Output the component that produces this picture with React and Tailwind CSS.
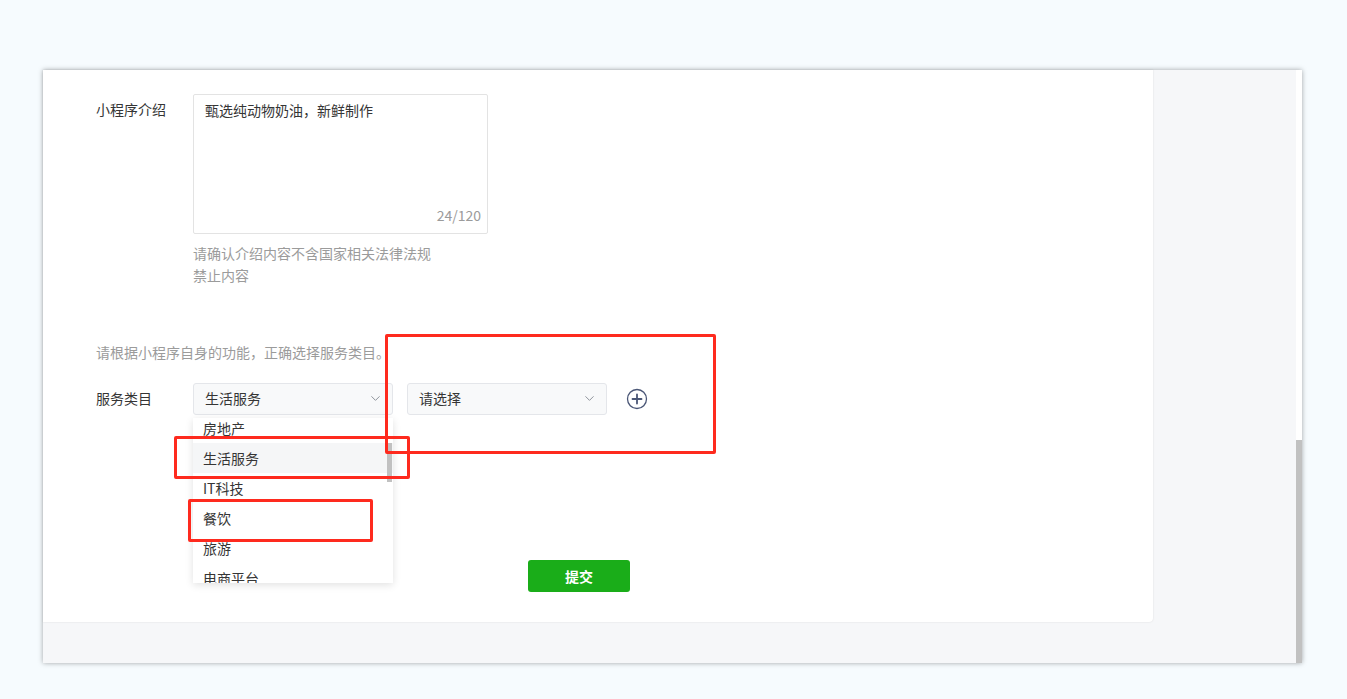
import React from 'react';
import { ChevronDown } from 'lucide-react';

const font = { fontFamily: '"Noto Sans CJK SC", "Noto Sans", sans-serif' };

const options = ['房地产', '生活服务', 'IT科技', '餐饮', '旅游', '电商平台'];

const PlusCircle = () => (
  <svg width="22" height="22" viewBox="0 0 22 22" fill="none">
    <circle cx="11" cy="11" r="9.5" stroke="#4a5676" strokeWidth="1.3" />
    <path d="M11 6.5v9M6.5 11h9" stroke="#4a5676" strokeWidth="1.8" strokeLinecap="round" />
  </svg>
);

const Select = ({ value, children }) => (
  <div className="relative">
    <div className="w-[200px] h-[32px] flex items-center justify-between pl-[11px] pr-[9px] pb-[1px] bg-[#f8f9fa] border border-[#e4e6ea] rounded-[3px] text-[14px] text-[#353535]">
      <span>{value}</span>
      <ChevronDown size={15} strokeWidth={1.6} className="text-[#8f949c]" />
    </div>
    {children}
  </div>
);

export default function App() {
  return (
    <div className="relative h-[699px] w-[1347px] bg-[#f6fbfe] pt-[70px] pl-[43px] overflow-hidden" style={font}>
      {/* screenshot panel */}
      <div className="flex w-[1259px] h-[593px] shadow-[0_0_5px_rgba(0,0,0,0.35)]">
        <div className="w-[1253px] flex flex-col bg-[#f6f7f9]">
          <div className="w-[1110px] h-[552px] bg-white rounded-br-[4px] shadow-[0_0_2px_rgba(0,0,0,0.12)] pt-[24px] pl-[53px]">
            {/* intro */}
            <div className="flex">
              <div className="w-[97px] text-[14px] text-[#353535] leading-[22px] pt-[4px]">小程序介绍</div>
              <div>
                <div className="relative w-[295px] h-[140px] border border-[#e3e3e3] rounded-[2px] px-[11px] pt-[4px] text-[14px] text-[#353535] leading-[22px]">
                  甄选纯动物奶油，新鲜制作
                  <span className="absolute right-[6px] bottom-[7px] text-[14px] text-[#9b9b9b]">24/120</span>
                </div>
                <div className="mt-[8px] w-[245px] text-[14px] leading-[22px] text-[#9b9b9b]">
                  请确认介绍内容不含国家相关法律法规禁止内容
                </div>
              </div>
            </div>

            {/* category */}
            <div className="mt-[55px] text-[14px] leading-[22px] text-[#9b9b9b]">请根据小程序自身的功能，正确选择服务类目。</div>
            <div className="mt-[20px] flex items-center">
              <div className="w-[97px] text-[14px] text-[#353535] pb-[1px]">服务类目</div>
              <Select value="生活服务">
                <div className="absolute left-0 top-[35px] w-[200px] h-[165px] bg-white overflow-hidden shadow-[0_2px_8px_rgba(0,0,0,0.12)] z-10">
                  <div className="-mt-[5px]">
                    {options.map((o) => (
                      <div
                        key={o}
                        className={`h-[30px] flex items-center pl-[10px] text-[14px] text-[#353535] ${o === '生活服务' ? 'bg-[#f5f6f7]' : ''}`}
                      >
                        {o}
                      </div>
                    ))}
                  </div>
                  <div className="absolute right-[1px] top-[25px] w-[5px] h-[39px] bg-[#c1c1c1]" />
                </div>
              </Select>
              <div className="ml-[14px]">
                <Select value="请选择" />
              </div>
              <div className="ml-[19px] flex items-center">
                <PlusCircle />
              </div>
            </div>

            <div className="mt-[145px] ml-[432px]">
              <button className="w-[102px] h-[32px] bg-[#1aad19] rounded-[3px] text-white text-[14px] font-bold">提交</button>
            </div>
          </div>
        </div>
        <div className="w-[6px] flex flex-col">
          <div className="h-[370px] bg-white" />
          <div className="flex-1 bg-[#c1c1c1]" />
        </div>
      </div>

      {/* annotation boxes */}
      <div className="absolute z-20 left-[385px] top-[334px] w-[331px] h-[120px] border-[3px] border-[#fe2a1e] rounded-[2px]" />
      <div className="absolute z-20 left-[174px] top-[436px] w-[236px] h-[43px] border-[3px] border-[#fe2a1e] rounded-[2px]" />
      <div className="absolute z-20 left-[188px] top-[499px] w-[185px] h-[43px] border-[3px] border-[#fe2a1e] rounded-[2px]" />
    </div>
  );
}
